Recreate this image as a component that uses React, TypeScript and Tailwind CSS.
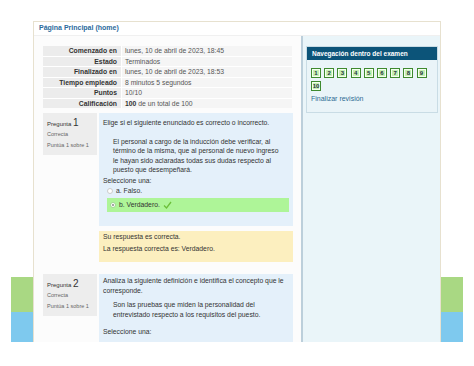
import React from "react";

const font = { fontFamily: '"Liberation Sans", Arial, sans-serif' };

const rows: [string, React.ReactNode][] = [
  ["Comenzado en", "lunes, 10 de abril de 2023, 18:45"],
  ["Estado", "Terminados"],
  ["Finalizado en", "lunes, 10 de abril de 2023, 18:53"],
  ["Tiempo empleado", "8 minutos 5 segundos"],
  ["Puntos", "10/10"],
  ["Calificación", (<><b className="text-[#333]">100</b> de un total de 100</>)],
];

function Info({ n }: { n: number }) {
  return (
    <div className="w-[54px] shrink-0 self-start bg-[#ededed] px-[4px] pt-[5px] pb-[4px]">
      <div className="text-[6px] leading-[9px] text-[#333]">
        Pregunta <span className="text-[10px] font-normal">{n}</span>
      </div>
      <div className="text-[5.5px] leading-[11px] text-[#666]">Correcta</div>
      <div className="text-[5.5px] leading-[11px] text-[#666]">Puntúa 1 sobre 1</div>
    </div>
  );
}

export default function App() {
  return (
    <div className="w-[474px] h-[366px] bg-white overflow-hidden pt-[21px]" style={font}>
      <div className="flex">
        <div className="ml-[11px] w-[22px] flex flex-col pt-[256px]">
          <div className="h-[35px] bg-[#a9d883]" />
          <div className="h-[30px] bg-[#7ec9ee]" />
        </div>
        <div className="w-[408px] h-[321px] overflow-hidden flex flex-col border-l border-r border-t border-[#e7e1cf] bg-white">
          <div className="h-[14px] shrink-0 flex items-center pl-[5px] text-[7px] font-bold text-[#2b6a9b] border-b border-[#f0f0f0]">
            Página Principal (home)
          </div>
          <div className="flex flex-1 min-h-0">
            <div className="w-[267px] shrink-0 bg-[#fcfcfc] pt-[10px] pl-[9px] pr-[8px] flex flex-col overflow-hidden">
              <div className="w-[249px] flex flex-col gap-[1px] bg-white">
                {rows.map(([k, v]) => (
                  <div key={k} className="flex h-[9.5px] text-[6.8px] leading-[9.5px]">
                    <div className="w-[78px] bg-[#ececec] text-right pr-[4px] font-bold text-[#333]">{k}</div>
                    <div className="flex-1 ml-[1px] bg-[#f5f5f5] pl-[3px] text-[#555]">{v}</div>
                  </div>
                ))}
              </div>

              <div className="flex gap-[2px] mt-[5px]">
                <Info n={1} />
                <div className="flex-1 flex flex-col">
                  <div className="bg-[#e4f0fa] pl-[4px] pr-[4px] pt-[5px] pb-[14px] text-[6.8px] text-[#333]">
                    <div className="leading-[10px]">Elige si el siguiente enunciado es correcto o incorrecto.</div>
                    <div className="pl-[10px] mt-[9px] leading-[9.4px] whitespace-nowrap">
                      El personal a cargo de la inducción debe verificar, al
                      <br />
                      término de la misma, que al personal de nuevo ingreso
                      <br />
                      le hayan sido aclaradas todas sus dudas respecto al
                      <br />
                      puesto que desempeñará.
                    </div>
                    <div className="mt-[1px] leading-[10px]">Seleccione una:</div>
                    <div className="flex items-center h-[10px] pl-[4px] gap-[3px]">
                      <span className="w-[6px] h-[6px] rounded-full border border-[#ccc] bg-white" />
                      <span>a. Falso.</span>
                    </div>
                    <div className="flex items-center h-[14px] ml-[4px] pl-[3px] gap-[3px] bg-[#aef598] mt-[2px]">
                      <span className="w-[6px] h-[6px] rounded-full border border-[#9fd890] bg-white flex items-center justify-center">
                        <span className="w-[2px] h-[2px] rounded-full bg-[#888]" />
                      </span>
                      <span>b. Verdadero.</span>
                      <svg width="9" height="8" viewBox="0 0 9 8">
                        <path d="M1 4.5 L3.5 7 L8 1" fill="none" stroke="#6cbf3a" strokeWidth="1.3" />
                      </svg>
                    </div>
                  </div>
                  <div className="mt-[5px] bg-[#fcefbf] pl-[4px] pt-0 pb-[6px] text-[6.8px] text-[#333]">
                    <div className="leading-[12.5px]">Su respuesta es correcta.</div>
                    <div className="leading-[12.5px]">La respuesta correcta es: Verdadero.</div>
                  </div>
                </div>
              </div>

              <div className="flex gap-[2px] mt-[12px] shrink-0">
                <Info n={2} />
                <div className="flex-1 bg-[#e4f0fa] pl-[4px] pr-[4px] pt-[2px] h-[80px] text-[6.8px] text-[#333]">
                  <div className="leading-[10px] whitespace-nowrap">
                    Analiza la siguiente definición e identifica el concepto que le
                    <br />
                    corresponde.
                  </div>
                  <div className="pl-[10px] mt-[4.5px] leading-[9.4px] whitespace-nowrap">
                    Son las pruebas que miden la personalidad del
                    <br />
                    entrevistado respecto a los requisitos del puesto.
                  </div>
                  <div className="mt-[8.5px] leading-[10px]">Seleccione una:</div>
                </div>
              </div>
            </div>
            <div className="flex-1 border-l-2 border-[#bccfdb] bg-[#eaf5f9] pt-[10px] pl-[3px] pr-[5px]">
              <div className="border border-[#c9dce5] bg-[#eaf4f8]">
                <div className="h-[13px] bg-[#0c5479] flex items-center pl-[5px] text-[6.5px] font-bold text-white">
                  Navegación dentro del examen
                </div>
                <div className="px-[4px] pt-[8px] pb-[8px]">
                  <div className="flex flex-wrap gap-x-[3.2px] gap-y-[3px] w-[122px]">
                    {[1, 2, 3, 4, 5, 6, 7, 8, 9, 10].map((n) => (
                      <div
                        key={n}
                        className="w-[10px] h-[10px] border border-[#3f8a2f] bg-[#c6efb2] flex items-center justify-center text-[6px] font-bold text-[#234]"
                        style={{ boxShadow: "inset 0 0 0 1px #f4fff0" }}
                      >
                        {n}
                      </div>
                    ))}
                  </div>
                  <div className="mt-[3px] text-[7px] leading-[10px] text-[#2e6b93]">Finalizar revisión</div>
                </div>
              </div>
            </div>
          </div>
        </div>
        <div className="w-[22px] flex flex-col pt-[256px]">
          <div className="h-[35px] bg-[#a9d883]" />
          <div className="h-[30px] bg-[#7ec9ee]" />
        </div>
      </div>
    </div>
  );
}
